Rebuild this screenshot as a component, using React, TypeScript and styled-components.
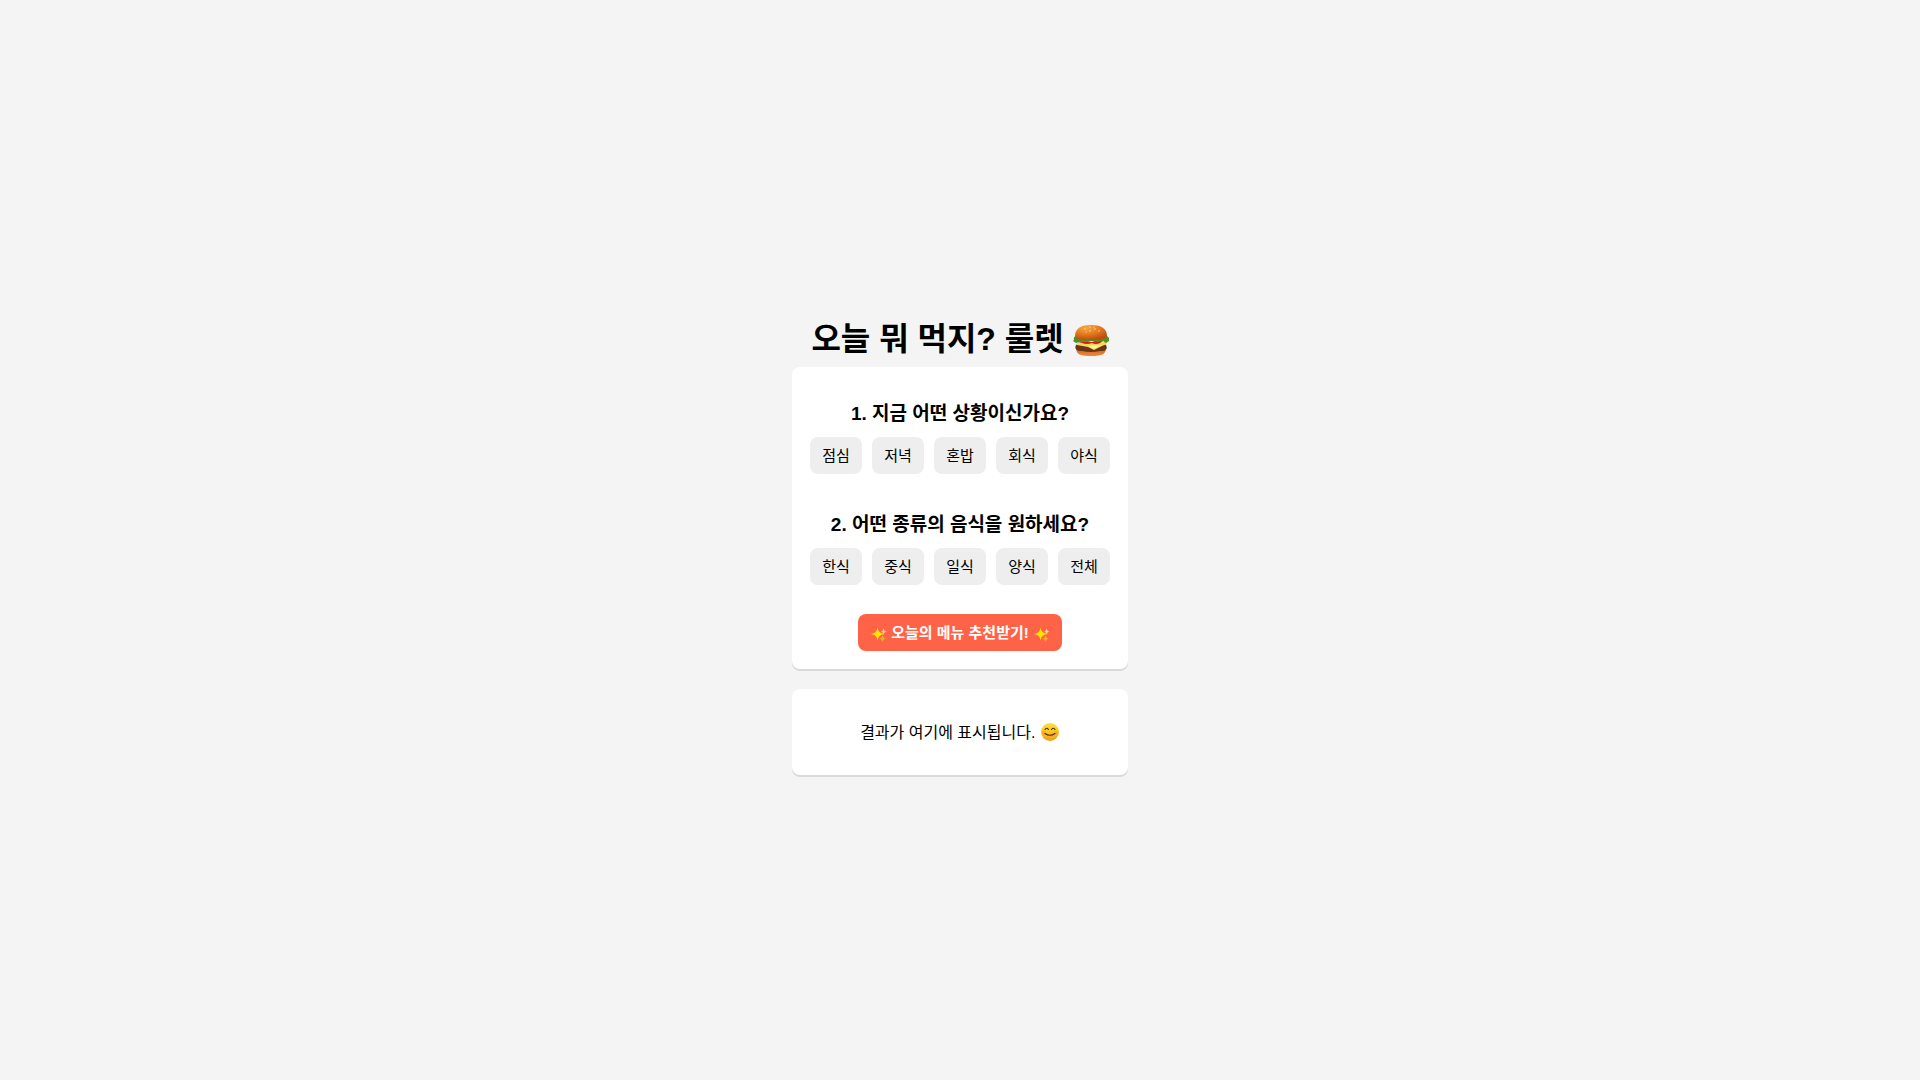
import React from 'react';
import styled, { createGlobalStyle } from 'styled-components';

const GlobalStyle = createGlobalStyle`
  body {
    margin: 0;
    min-height: 100vh;
    display: flex;
    justify-content: center;
    align-items: center;
    background: #f4f4f4;
    color: #000;
    font-family: "Liberation Sans", "Noto Sans CJK KR", sans-serif;
    text-align: center;
  }
`;

const Title = styled.h1`
  margin: 30px 0 4px;
  font-size: 32px;
  line-height: 48px;
`;

const Card = styled.section`
  display: flex;
  flex-direction: column;
  align-items: center;
  padding: 18px;
  margin-bottom: 20px;
  background: #fff;
  border-radius: 8px;
  box-shadow: 0 2px 0 #d9d9d9;
`;

const Question = styled.h2`
  margin: 15px 0 9px;
  font-size: 19px;
  line-height: 28px;
`;

const Options = styled.div`
  display: flex;
  justify-content: center;
  gap: 10px;
  margin-bottom: 22px;
`;

const Button = styled.button`
  min-width: 52px;
  padding: 8px 12px;
  border: 0;
  border-radius: 8px;
  background: #eee;
  color: #000;
  font-family: inherit;
  font-size: 15px;
  line-height: 21px;
  cursor: pointer;
`;

const PrimaryButton = styled(Button)`
  margin-top: 7px;
  background: #ff6347;
  color: #fff;
  font-weight: bold;
`;

const Result = styled.p`
  margin: 14px 0 12px;
  font-size: 16px;
  line-height: 24px;
`;

const Emoji = styled.svg<{ $size: number }>`
  width: ${(p) => p.$size}px;
  height: ${(p) => p.$size}px;
  vertical-align: ${(p) => (p.$size > 30 ? -8 : -4)}px;
`;

function Burger() {
  return (
    <Emoji $size={36} viewBox="1 1 36 36" role="img" aria-label="🍔">
      <defs>
        <radialGradient id="bun" cx="35%" cy="20%" r="80%">
          <stop offset="0" stopColor="#f5a83c" />
          <stop offset=".5" stopColor="#e77d20" />
          <stop offset="1" stopColor="#bd4d10" />
        </radialGradient>
        <linearGradient id="heel" x2="0" y2="1">
          <stop offset="0" stopColor="#c85714" />
          <stop offset="1" stopColor="#f18a3d" />
        </linearGradient>
      </defs>
      <path d="M4 26C4 33 7 35 19 35S34 33 34 26Z" fill="url(#heel)" />
      <path d="M4 24C2 28 5 30 10 30Q19 32 28 30C34 30 36 28 34 24L31 22H7Z" fill="#6a3415" />
      <path d="M5 22L34 21L35 23L30 25L22 29L16 26L5 24Z" fill="#f7d95a" />
      <path d="M16 25L22 28L29 24Z" fill="#fff09a" />
      <path d="M6 21Q11 18 15 20T23 20T31 20L28 22Q24 24 20 22Q15 24 10 22Z" fill="#d91d14" />
      <path d="M2 19Q1 15 5 15H33Q38 15 37 20L34 22L31 20L25 21L20 20L14 21L8 21L4 22L1 20Z" fill="#4e9420" />
      <path d="M3 15C3 7 10 4 19 4S35 7 35 15C35 18 29 19 19 19S3 18 3 15Z" fill="url(#bun)" />
      <g fill="#ffe1a0">
        <circle cx="13" cy="8" r=".7" /><circle cx="18" cy="6" r=".7" />
        <circle cx="23" cy="8" r=".7" /><circle cx="18" cy="10" r=".7" />
        <circle cx="27" cy="10" r=".7" /><circle cx="22" cy="6" r=".6" />
        <circle cx="14" cy="11" r=".6" />
      </g>
    </Emoji>
  );
}

function Sparkles() {
  return (
    <Emoji $size={17} viewBox="0 0 17 17" role="img" aria-label="✨">
      <path d="M7.500 2.500Q8 8.300 14.500 9Q8 9.700 7.500 15.500Q7 9.700 1 9Q7 8.300 7.500 2.500Z" fill="#ffe600" />
      <path d="M13.500 3.500Q14 6 16.500 6.500Q14 7 13.500 9.500Q13 7 11 6.500Q13 6 13.500 3.500Z" fill="#f6d38a" />
      <path d="M12.500 10.500Q13 13 16 13.500Q13 14 12.500 17Q12 14 9.500 13.500Q12 13 12.500 10.500Z" fill="#e8ae2c" />
    </Emoji>
  );
}

function Smile() {
  return (
    <Emoji $size={20} viewBox="0 0 20 20" role="img" aria-label="😊">
      <defs>
        <linearGradient id="face" x2="0" y2="1">
          <stop offset="0" stopColor="#fddf38" />
          <stop offset=".5" stopColor="#fbc51d" />
          <stop offset="1" stopColor="#f29a20" />
        </linearGradient>
      </defs>
      <circle cx="10" cy="10" r="9" fill="url(#face)" />
      <circle cx="4" cy="11" r="2" fill="#f58b32" opacity=".5" />
      <circle cx="16" cy="11" r="2" fill="#f58b32" opacity=".5" />
      <path d="M5 7.500Q6.500 5 8.500 7.500M11.500 7.500Q13.500 5 15 7.500M5 11.500Q10 15 15 11.500" fill="none" stroke="#4b2b14" strokeWidth="1.100" strokeLinecap="round" />
    </Emoji>
  );
}

const situations = ['점심', '저녁', '혼밥', '회식', '야식'];
const cuisines = ['한식', '중식', '일식', '양식', '전체'];

export default function App() {
  return (
    <main lang="ko">
      <GlobalStyle />
      <Title>오늘 뭐 먹지? 룰렛 <Burger /></Title>
      <Card>
        <Question>1. 지금 어떤 상황이신가요?</Question>
        <Options>
          {situations.map((s) => <Button type="button" key={s}>{s}</Button>)}
        </Options>
        <Question>2. 어떤 종류의 음식을 원하세요?</Question>
        <Options>
          {cuisines.map((c) => <Button type="button" key={c}>{c}</Button>)}
        </Options>
        <PrimaryButton type="button"><Sparkles /> 오늘의 메뉴 추천받기! <Sparkles /></PrimaryButton>
      </Card>
      <Card>
        <Result>결과가 여기에 표시됩니다. <Smile /></Result>
      </Card>
    </main>
  );
}
